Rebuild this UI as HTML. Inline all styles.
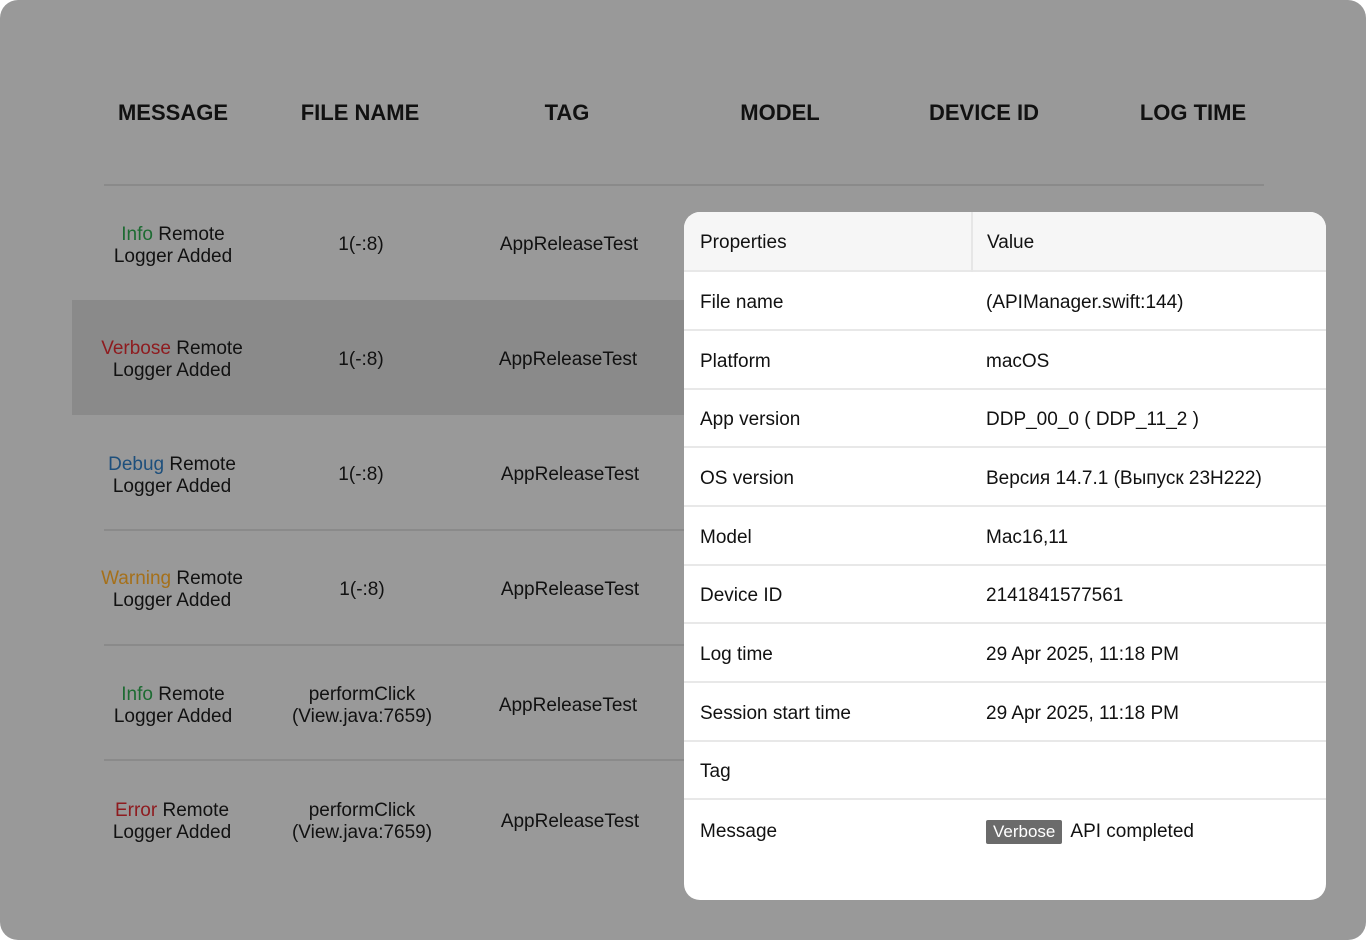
<!DOCTYPE html>
<html><head><meta charset="utf-8"><style>
*{margin:0;padding:0;box-sizing:border-box}
body{width:1366px;height:940px;background:#fff;font-family:"Liberation Sans",sans-serif;overflow:hidden;position:relative}
.bg{position:absolute;left:0;top:0;width:1366px;height:940px;background:#999;border-radius:18px}
.h{position:absolute;top:100px;font-size:22px;font-weight:bold;color:#111;transform:translateX(-50%);white-space:nowrap}
.line{position:absolute;left:104px;width:1160px;height:2px;background:#8a8a8a}
.c{position:absolute;transform:translate(-50%,-50%);text-align:center;font-size:19px;color:#111;line-height:22px;white-space:nowrap;margin-top:2px}
.hl{position:absolute;left:72px;top:300px;width:620px;height:115px;background:#8a8a8a}
.panel{position:absolute;left:684px;top:212px;width:642px;height:688px;background:#fff;border-radius:16px;overflow:hidden}
.row{position:absolute;left:0;width:642px;height:59px;border-bottom:2px solid #e8e8e8;font-size:19px;color:#111}
.row>span{position:absolute;top:50%;transform:translateY(-50%);margin-top:2px}
.k{left:16px}.v{left:302px}
</style></head><body>
<div class="bg"></div>
<div class="h" style="left:173px">MESSAGE</div>
<div class="h" style="left:360px">FILE NAME</div>
<div class="h" style="left:567px">TAG</div>
<div class="h" style="left:780px">MODEL</div>
<div class="h" style="left:984px">DEVICE ID</div>
<div class="h" style="left:1193px">LOG TIME</div>
<div class="line" style="top:184px"></div>
<div class="hl"></div>
<div class="line" style="top:529px"></div>
<div class="line" style="top:644px"></div>
<div class="line" style="top:759px"></div>

<div class="c" style="left:173px;top:244px"><span style="color:#1d6b32">Info</span> Remote<br>Logger Added</div>
<div class="c" style="left:361px;top:243px">1(-:8)</div>
<div class="c" style="left:569px;top:243px">AppReleaseTest</div>

<div class="c" style="left:172px;top:358px"><span style="color:#8e1b1f">Verbose</span> Remote<br>Logger Added</div>
<div class="c" style="left:361px;top:358px">1(-:8)</div>
<div class="c" style="left:568px;top:358px">AppReleaseTest</div>

<div class="c" style="left:172px;top:474px"><span style="color:#1d4f7c">Debug</span> Remote<br>Logger Added</div>
<div class="c" style="left:361px;top:473px">1(-:8)</div>
<div class="c" style="left:570px;top:473px">AppReleaseTest</div>

<div class="c" style="left:172px;top:588px"><span style="color:#a5701a">Warning</span> Remote<br>Logger Added</div>
<div class="c" style="left:362px;top:588px">1(-:8)</div>
<div class="c" style="left:570px;top:588px">AppReleaseTest</div>

<div class="c" style="left:173px;top:704px"><span style="color:#1d6b32">Info</span> Remote<br>Logger Added</div>
<div class="c" style="left:362px;top:704px">performClick<br>(View.java:7659)</div>
<div class="c" style="left:568px;top:704px">AppReleaseTest</div>

<div class="c" style="left:172px;top:820px"><span style="color:#8e1b1f">Error</span> Remote<br>Logger Added</div>
<div class="c" style="left:362px;top:820px">performClick<br>(View.java:7659)</div>
<div class="c" style="left:570px;top:820px">AppReleaseTest</div>

<div class="panel">
<div class="row" style="top:0;height:60px;background:#f6f6f6"><span class="k">Properties</span><span class="v" style="left:303px">Value</span><div style="position:absolute;left:287px;top:0;width:2px;height:60px;background:#e6e6e6"></div></div>
<div class="row" style="top:60px"><span class="k">File name</span><span class="v">(APIManager.swift:144)</span></div>
<div class="row" style="top:119px"><span class="k">Platform</span><span class="v">macOS</span></div>
<div class="row" style="top:177px"><span class="k">App version</span><span class="v">DDP_00_0 ( DDP_11_2 )</span></div>
<div class="row" style="top:236px"><span class="k">OS version</span><span class="v">Версия 14.7.1 (Выпуск 23H222)</span></div>
<div class="row" style="top:295px"><span class="k">Model</span><span class="v">Mac16,11</span></div>
<div class="row" style="top:353px"><span class="k">Device ID</span><span class="v">2141841577561</span></div>
<div class="row" style="top:412px"><span class="k">Log time</span><span class="v">29 Apr 2025, 11:18 PM</span></div>
<div class="row" style="top:471px"><span class="k">Session start time</span><span class="v">29 Apr 2025, 11:18 PM</span></div>
<div class="row" style="top:529px"><span class="k">Tag</span></div>
<div class="row" style="top:588px;border:none"><span class="k">Message</span><span class="v"><span style="display:inline-block;background:#6b6b6b;color:#fff;font-size:17px;padding:2px 7px;border-radius:2px;margin-right:8px;vertical-align:middle">Verbose</span>API completed</span></div>
</div>
</body></html>
